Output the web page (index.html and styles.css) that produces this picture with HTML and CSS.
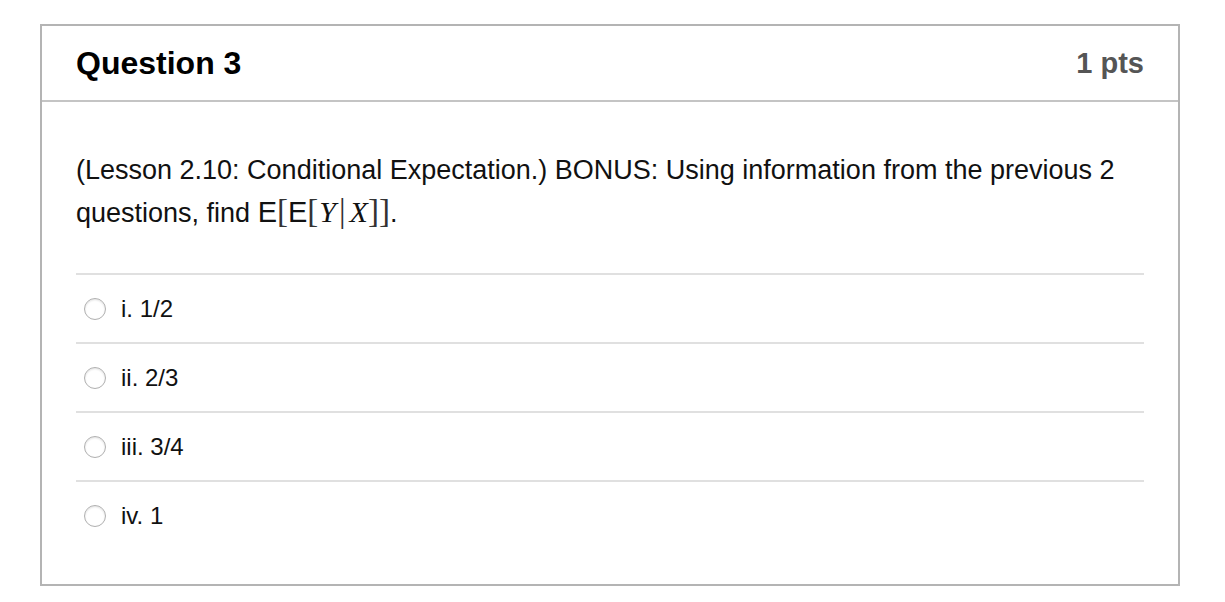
FILE: index.html
```html
<!DOCTYPE html>
<html>
<head>
<meta charset="utf-8">
<link rel="stylesheet" href="styles.css">
</head>
<body>
<div class="card">
  <div class="header">
    <h2 class="title">Question 3</h2>
    <div class="pts">1 pts</div>
  </div>
  <div class="content">
    <p class="question">(Lesson 2.10: Conditional Expectation.) BONUS: Using information from the previous 2 questions, find <span class="math"><span class="sf">E</span><span class="br">[</span><span class="sf">E</span><span class="br">[</span><span class="it">Y</span><span class="br bar">|</span><span class="it">X</span><span class="br">]]</span></span>.</p>
    <div class="answers">
      <label class="answer"><span class="radio"></span><span class="atext">i. 1/2</span></label>
      <label class="answer"><span class="radio"></span><span class="atext">ii. 2/3</span></label>
      <label class="answer"><span class="radio"></span><span class="atext">iii. 3/4</span></label>
      <label class="answer"><span class="radio"></span><span class="atext">iv. 1</span></label>
    </div>
  </div>
</div>
</body>
</html>
```

FILE: styles.css
```css
html, body {
  margin: 0;
  padding: 0;
  background: #fff;
}
body {
  padding: 24px 45px 16px 40px;
  font-family: "Liberation Sans", Arial, sans-serif;
  color: #111;
}
.card {
  border: 2px solid #b4b4b4;
  width: 1140px;
  box-sizing: border-box;
  height: 562px;
}
.header {
  display: flex;
  justify-content: space-between;
  align-items: center;
  height: 74px;
  padding: 0 34px 0 34px;
  border-bottom: 2px solid #c4c4c4;
}
.title {
  margin: 0;
  font-size: 32px;
  font-weight: bold;
  color: #000;
}
.pts {
  font-size: 29px;
  font-weight: bold;
  color: #555;
}
.content {
  padding: 48px 34px 0 34px;
}
.question {
  margin: 0;
  font-size: 27px;
  line-height: 41px;
  color: #111;
}
.math {
  white-space: nowrap;
}
.sf { font-family: "Liberation Sans", sans-serif; font-size: 29px; }
.br { font-family: "Liberation Serif", serif; font-size: 33px; color: #333; }
.bar { margin: 0 3px; }
.it { font-family: "Liberation Serif", serif; font-style: italic; font-size: 30px; margin-left: 1px; }
.answers {
  margin-top: 39px;
}
.answer {
  display: flex;
  align-items: center;
  height: 67px;
  border-top: 2px solid #e0e0e0;
}
.radio {
  width: 20px;
  height: 20px;
  border: 1px solid #b0b0b0;
  border-radius: 50%;
  margin-left: 8px;
  margin-right: 15px;
  box-shadow: inset 0 1px 2px rgba(0,0,0,0.12);
}
.atext {
  font-size: 24px;
  color: #111;
}
```
